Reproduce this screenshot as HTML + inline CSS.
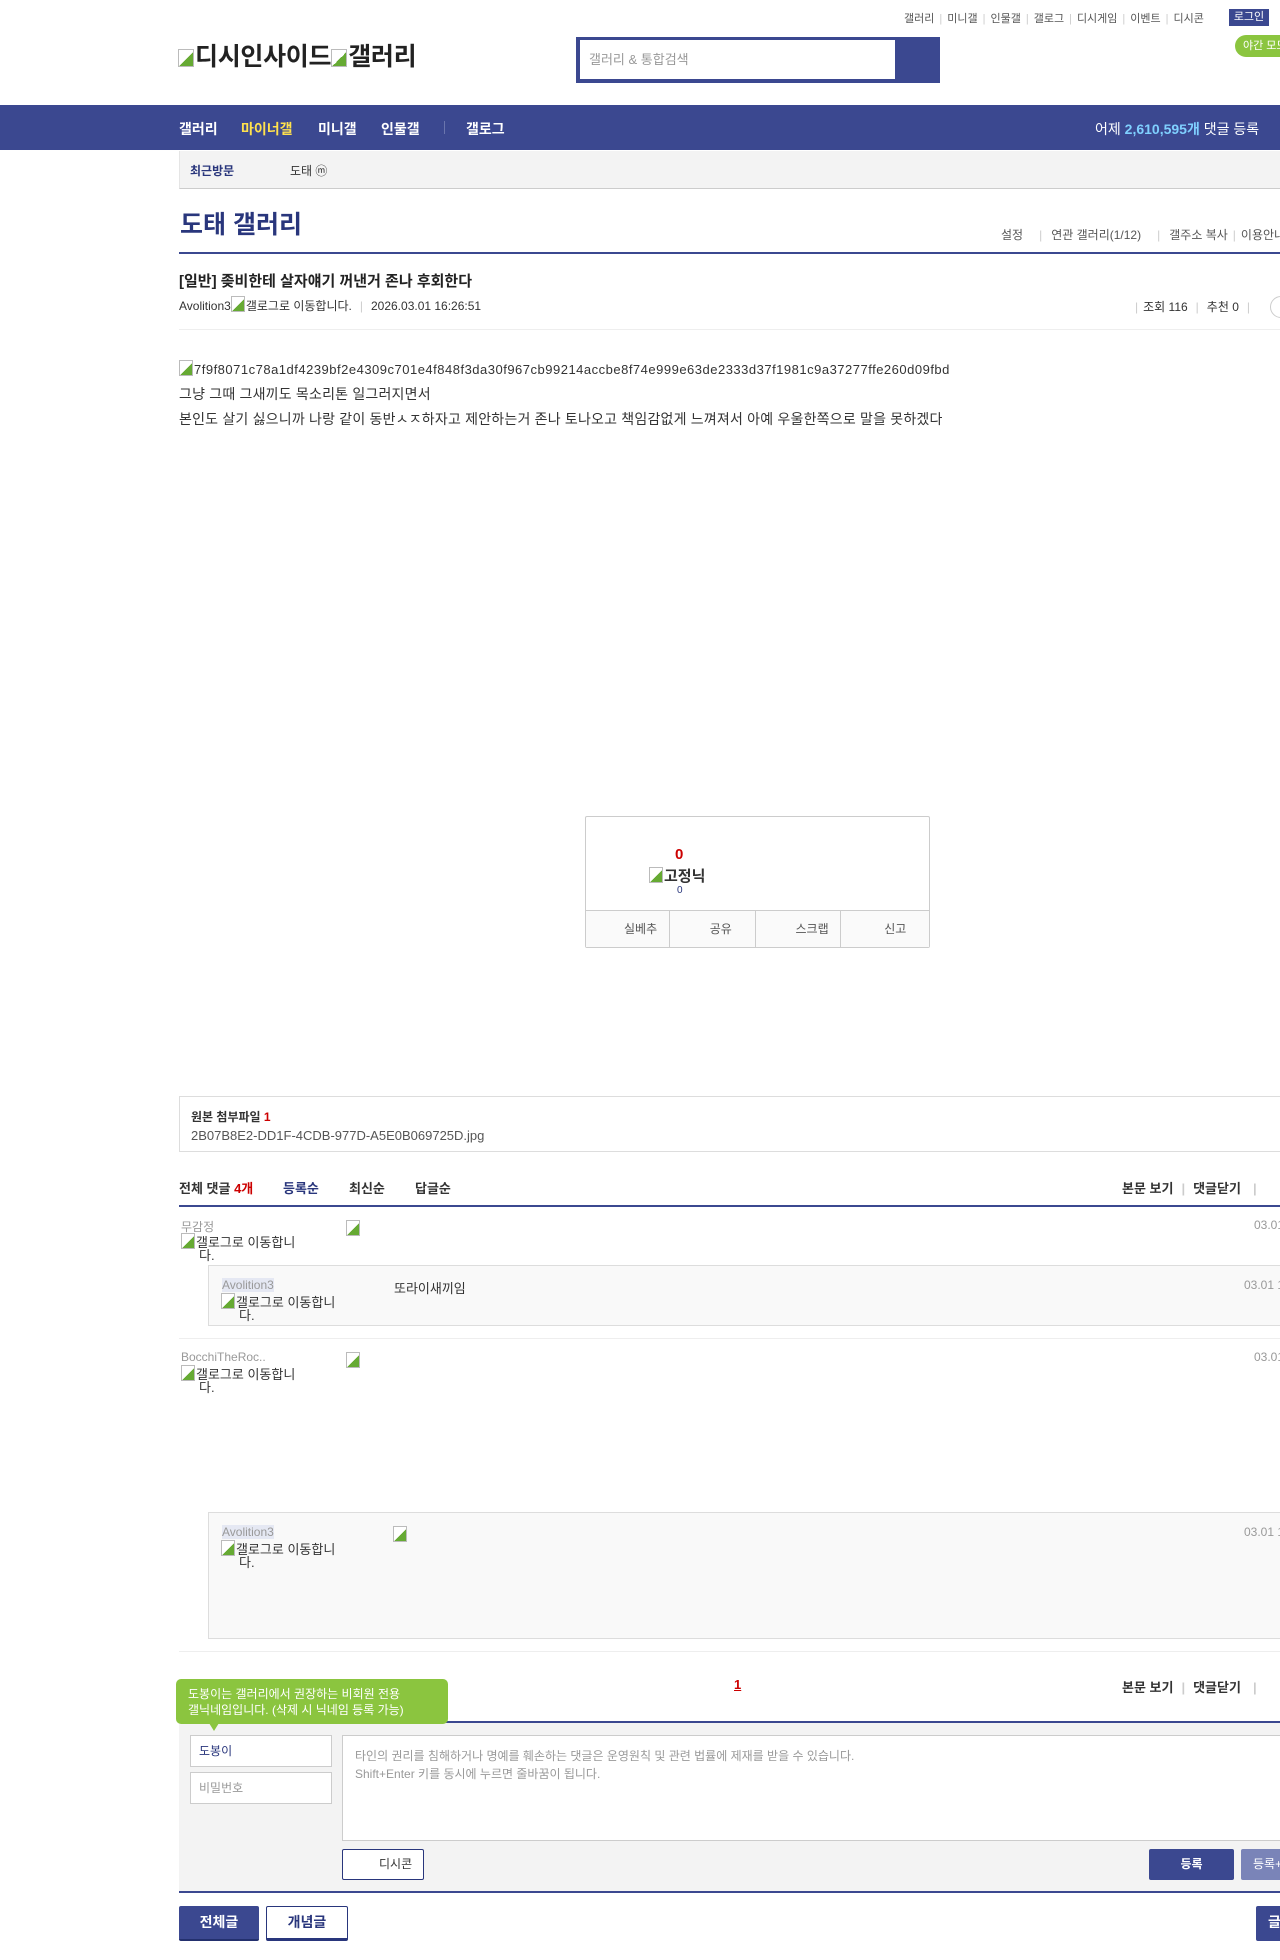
<!DOCTYPE html>
<html><head><meta charset="utf-8"><style>
*{margin:0;padding:0;box-sizing:border-box}
body{width:1280px;height:1960px;position:relative;overflow:hidden;background:#fff;font-family:"Liberation Sans","Noto Sans CJK KR",sans-serif;color:#333;font-size:13px}
.a{position:absolute;white-space:nowrap}
.nv{background:#3b4890}
.g{color:#999}
.sep{color:#ccc;margin:0 5px}
.img{display:inline-block;width:14px;height:16px;border:1px solid #bbb;background:linear-gradient(135deg,#fff 55%,#6a3 55%);vertical-align:-2px;margin-right:1px}
</style></head><body>
<div class="a" style="top:10px;left:904px;font-size:11px;color:#555">갤러리<span class="sep">|</span>미니갤<span class="sep">|</span>인물갤<span class="sep">|</span>갤로그<span class="sep">|</span>디시게임<span class="sep">|</span>이벤트<span class="sep">|</span>디시콘</div>
<div class="a nv" style="top:9px;left:1229px;width:40px;height:17px;color:#fff;font-size:11px;text-align:center;line-height:17px">로그인</div>
<div class="a" style="top:35px;left:1235px;width:60px;height:22px;border-radius:11px;background:#8bc53f;color:#fff;font-size:11px;line-height:22px;padding-left:8px">야간 모드</div>
<div class="a" style="top:37px;left:178px;font-size:25px;font-weight:bold;color:#222;letter-spacing:-0.3px"><span class="img" style="width:16px;height:18px"></span>디시인사이드<span class="img" style="width:16px;height:18px"></span>갤러리</div>
<div class="a nv" style="top:37px;left:576px;width:364px;height:46px"></div>
<div class="a" style="top:40px;left:580px;width:315px;height:39px;background:#fff;font-size:13px;color:#999;line-height:39px;padding-left:9px">갤러리 &amp; 통합검색</div>
<div class="a nv" style="top:105px;left:0;width:1280px;height:45px"></div>
<div class="a" style="top:119px;left:179px;font-size:14px;font-weight:bold;color:#fff">갤러리</div>
<div class="a" style="top:119px;left:241px;font-size:14px;font-weight:bold;color:#ffe14d">마이너갤</div>
<div class="a" style="top:119px;left:318px;font-size:14px;font-weight:bold;color:#fff">미니갤</div>
<div class="a" style="top:119px;left:381px;font-size:14px;font-weight:bold;color:#fff">인물갤</div>
<div class="a" style="top:121px;left:444px;width:1px;height:13px;background:#6a75ad"></div>
<div class="a" style="top:119px;left:466px;font-size:14px;font-weight:bold;color:#fff">갤로그</div>
<div class="a" style="top:119px;left:1095px;font-size:14px;color:#fff">어제 <b style="color:#7fd0ff">2,610,595개</b> 댓글 등록</div>
<div class="a" style="top:151px;left:179px;width:1101px;height:38px;background:#f3f3f3;border-bottom:1px solid #ccc;border-left:1px solid #e5e5e5"></div>
<div class="a" style="top:162px;left:190px;font-size:12px;font-weight:bold;color:#29367c">최근방문</div>
<div class="a" style="top:162px;left:290px;font-size:12px;color:#333">도태 ⓜ</div>
<div class="a" style="top:205px;left:180px;font-size:25px;font-weight:bold;color:#29367c">도태 갤러리</div>
<div class="a" style="top:226px;left:1001px;font-size:12px;color:#555">설정<span class="sep" style="margin:0 9px 0 16px">|</span>연관 갤러리(1/12)<span class="sep" style="margin:0 9px 0 16px">|</span>갤주소 복사<span class="sep">|</span>이용안내</div>
<div class="a nv" style="top:252px;left:179px;width:1101px;height:2px"></div>
<div class="a" style="top:270px;left:179px;font-size:15px;font-weight:bold;color:#222">[일반] 좆비한테 살자얘기 꺼낸거 존나 후회한다</div>
<div class="a" style="top:296px;left:179px;font-size:12px;color:#333">Avolition3<span class="img"></span>갤로그로 이동합니다.<span class="sep" style="margin:0 8px">|</span>2026.03.01 16:26:51</div>
<div class="a" style="top:298px;left:1130px;font-size:12px;color:#333"><span class="sep">|</span>조회 116<span class="sep" style="margin:0 8px">|</span>추천 0<span class="sep" style="margin:0 8px">|</span></div>
<div class="a" style="top:296px;left:1270px;width:24px;height:22px;border:1px solid #ccc;border-radius:11px"></div>
<div class="a" style="top:329px;left:179px;width:1101px;height:1px;background:#eee"></div>
<div class="a" style="top:360px;left:179px;font-size:13px;letter-spacing:0.5px;color:#333"><span class="img"></span>7f9f8071c78a1df4239bf2e4309c701e4f848f3da30f967cb99214accbe8f74e999e63de2333d37f1981c9a37277ffe260d09fbd</div>
<div class="a" style="top:384px;left:179px;font-size:14px;color:#333;letter-spacing:0.2px">그냥 그때 그새끼도 목소리톤 일그러지면서</div>
<div class="a" style="top:409px;left:179px;font-size:14px;color:#333;letter-spacing:0.2px">본인도 살기 싫으니까 나랑 같이 동반ㅅㅈ하자고 제안하는거 존나 토나오고 책임감없게 느껴져서 아예 우울한쪽으로 말을 못하겠다</div>
<div class="a" style="top:816px;left:585px;width:345px;height:132px;border:1px solid #ccc;border-radius:2px"></div>
<div class="a" style="top:846px;left:675px;font-size:15px;font-weight:bold;color:#c00">0</div>
<div class="a" style="top:865px;left:649px;font-size:15px;font-weight:bold;color:#333"><span class="img"></span>고정닉</div>
<div class="a" style="top:885px;left:677px;font-size:10px;color:#29367c">0</div>
<div class="a" style="top:910px;left:586px;width:343px;height:37px;border-top:1px solid #ccc;display:flex;font-size:12px;color:#555">
<div style="flex:1;border-right:1px solid #ccc;line-height:36px;background:#fafafa;padding-left:38px">실베추</div>
<div style="flex:1;border-right:1px solid #ccc;line-height:36px;background:#fafafa;padding-left:40px">공유</div>
<div style="flex:1;border-right:1px solid #ccc;line-height:36px;background:#fafafa;padding-left:40px">스크랩</div>
<div style="flex:1;line-height:36px;background:#fafafa;padding-left:43px">신고</div></div>
<div class="a" style="top:1096px;left:179px;width:1110px;height:56px;border:1px solid #ddd"></div>
<div class="a" style="top:1108px;left:191px;font-size:12px;font-weight:bold;color:#333">원본 첨부파일 <span style="color:#c00">1</span></div>
<div class="a" style="top:1128px;left:191px;font-size:13px;color:#555">2B07B8E2-DD1F-4CDB-977D-A5E0B069725D.jpg</div>
<div class="a" style="top:1178px;left:179px;font-size:13px;font-weight:bold;color:#333">전체 댓글 <span style="color:#c00">4개</span></div>
<div class="a" style="top:1178px;left:283px;font-size:13px;font-weight:bold;color:#29367c">등록순</div>
<div class="a" style="top:1178px;left:349px;font-size:13px;font-weight:bold;color:#333">최신순</div>
<div class="a" style="top:1178px;left:415px;font-size:13px;font-weight:bold;color:#333">답글순</div>
<div class="a" style="top:1178px;left:1122px;font-size:13px;font-weight:bold;color:#333">본문 보기<span class="sep" style="margin:0 8px">|</span>댓글닫기<span class="sep" style="margin:0 12px">|</span></div>
<div class="a nv" style="top:1205px;left:179px;width:1101px;height:2px"></div>
<div class="a g" style="top:1218px;left:181px;font-size:12px">무감정</div>
<div class="a" style="top:1233px;left:181px;font-size:13px;line-height:13px;color:#333"><span class="img"></span>갤로그로 이동합니<br>&nbsp;&nbsp;&nbsp;&nbsp;&nbsp;다.</div>
<div class="a" style="top:1220px;left:346px"><span class="img"></span></div>
<div class="a g" style="top:1218px;left:1254px;font-size:12px">03.01</div>
<div class="a" style="top:1265px;left:208px;width:1080px;height:61px;background:#f9f9f9;border:1px solid #ddd"></div>
<div class="a g" style="top:1278px;left:222px;font-size:12px;background:#e5e8f3">Avolition3</div>
<div class="a" style="top:1293px;left:221px;font-size:13px;line-height:13px;color:#333"><span class="img"></span>갤로그로 이동합니<br>&nbsp;&nbsp;&nbsp;&nbsp;&nbsp;다.</div>
<div class="a" style="top:1278px;left:394px;font-size:13px;color:#333">또라이새끼임</div>
<div class="a g" style="top:1278px;left:1244px;font-size:12px">03.01 1</div>
<div class="a" style="top:1338px;left:179px;width:1101px;height:1px;background:#eee"></div>
<div class="a g" style="top:1350px;left:181px;font-size:12px">BocchiTheRoc..</div>
<div class="a" style="top:1365px;left:181px;font-size:13px;line-height:13px;color:#333"><span class="img"></span>갤로그로 이동합니<br>&nbsp;&nbsp;&nbsp;&nbsp;&nbsp;다.</div>
<div class="a" style="top:1352px;left:346px"><span class="img"></span></div>
<div class="a g" style="top:1350px;left:1254px;font-size:12px">03.01</div>
<div class="a" style="top:1512px;left:208px;width:1080px;height:127px;background:#f9f9f9;border:1px solid #ddd"></div>
<div class="a g" style="top:1525px;left:222px;font-size:12px;background:#e5e8f3">Avolition3</div>
<div class="a" style="top:1540px;left:221px;font-size:13px;line-height:13px;color:#333"><span class="img"></span>갤로그로 이동합니<br>&nbsp;&nbsp;&nbsp;&nbsp;&nbsp;다.</div>
<div class="a" style="top:1526px;left:393px"><span class="img"></span></div>
<div class="a g" style="top:1525px;left:1244px;font-size:12px">03.01 1</div>
<div class="a" style="top:1651px;left:179px;width:1101px;height:1px;background:#eee"></div>
<div class="a" style="top:1677px;left:734px;font-size:13px;font-weight:bold;color:#c00;text-decoration:underline">1</div>
<div class="a" style="top:1677px;left:1122px;font-size:13px;font-weight:bold;color:#333">본문 보기<span class="sep" style="margin:0 8px">|</span>댓글닫기<span class="sep" style="margin:0 12px">|</span></div>
<div class="a nv" style="top:1721px;left:179px;width:1101px;height:2px"></div>
<div class="a" style="top:1723px;left:179px;width:1101px;height:168px;background:#f3f3f3"></div>
<div class="a" style="top:1679px;left:176px;width:272px;height:45px;background:#8bc53f;border-radius:5px;color:#fff;font-size:12px;line-height:16px;padding:7px 0 0 12px;white-space:normal">도봉이는 갤러리에서 권장하는 비회원 전용<br>갤닉네임입니다. (삭제 시 닉네임 등록 가능)</div>
<div class="a" style="top:1723px;left:209px;width:0;height:0;border-left:5px solid transparent;border-right:5px solid transparent;border-top:8px solid #8bc53f"></div>
<div class="a" style="top:1735px;left:190px;width:142px;height:32px;background:#fff;border:1px solid #ccc;font-size:12px;color:#29367c;line-height:30px;padding-left:8px">도봉이</div>
<div class="a" style="top:1772px;left:190px;width:142px;height:32px;background:#fff;border:1px solid #ccc;font-size:12px;color:#999;line-height:30px;padding-left:8px">비밀번호</div>
<div class="a" style="top:1735px;left:342px;width:950px;height:106px;background:#fff;border:1px solid #ccc;font-size:12px;color:#999;line-height:18px;padding:11px 12px">타인의 권리를 침해하거나 명예를 훼손하는 댓글은 운영원칙 및 관련 법률에 제재를 받을 수 있습니다.<br>Shift+Enter 키를 동시에 누르면 줄바꿈이 됩니다.</div>
<div class="a" style="top:1849px;left:342px;width:82px;height:31px;background:#fff;border:1px solid #29367c;border-radius:2px;font-size:12px;color:#333;line-height:29px;padding-left:36px">디시콘</div>
<div class="a nv" style="top:1849px;left:1149px;width:85px;height:31px;border-radius:2px;color:#fff;font-size:12px;font-weight:bold;text-align:center;line-height:31px">등록</div>
<div class="a" style="top:1849px;left:1241px;width:60px;height:31px;background:#7a84b8;border-radius:2px;color:#fff;font-size:12px;line-height:31px;padding-left:12px">등록+추천</div>
<div class="a nv" style="top:1891px;left:179px;width:1101px;height:2px"></div>
<div class="a nv" style="top:1906px;left:179px;width:80px;height:35px;border-radius:2px;color:#fff;font-size:14px;font-weight:bold;text-align:center;line-height:33px;border-bottom:2px solid #23306e">전체글</div>
<div class="a" style="top:1906px;left:266px;width:82px;height:35px;border:1px solid #29367c;border-bottom:3px solid #29367c;border-radius:2px;color:#29367c;font-size:14px;font-weight:bold;text-align:center;line-height:31px">개념글</div>
<div class="a nv" style="top:1906px;left:1256px;width:60px;height:35px;border-radius:2px;color:#fff;font-size:14px;font-weight:bold;line-height:33px;padding-left:12px">글쓰기</div>
</body></html>
